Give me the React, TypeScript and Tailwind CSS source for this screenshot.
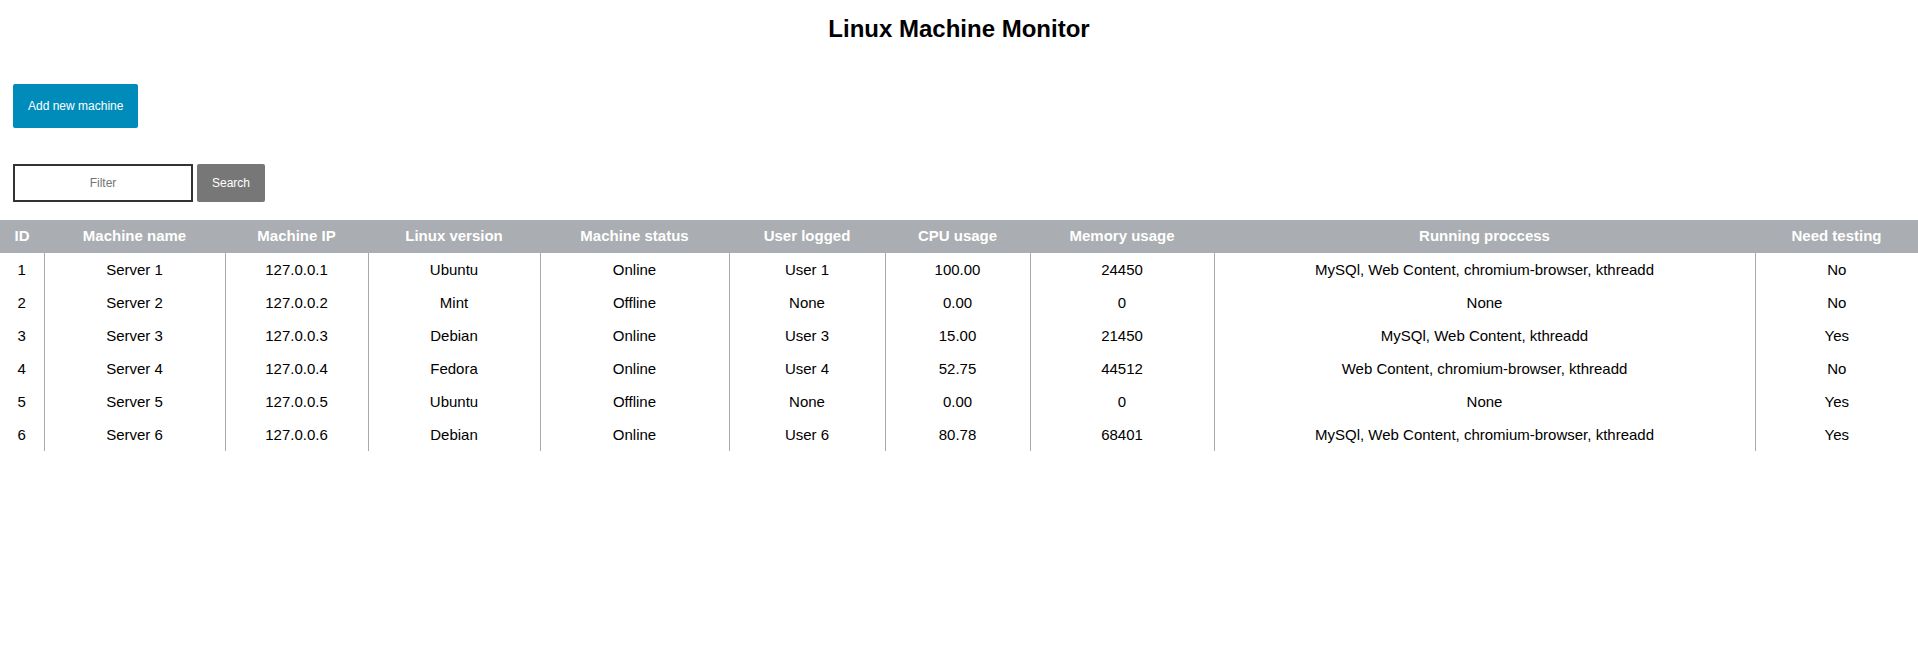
import React from "react";

interface Machine {
  id: number;
  name: string;
  ip: string;
  version: string;
  status: string;
  user: string;
  cpu: string;
  memory: string;
  processes: string;
  testing: string;
}

const MACHINES: Machine[] = [
  { id: 1, name: "Server 1", ip: "127.0.0.1", version: "Ubuntu", status: "Online", user: "User 1", cpu: "100.00", memory: "24450", processes: "MySQl, Web Content, chromium-browser, kthreadd", testing: "No" },
  { id: 2, name: "Server 2", ip: "127.0.0.2", version: "Mint", status: "Offline", user: "None", cpu: "0.00", memory: "0", processes: "None", testing: "No" },
  { id: 3, name: "Server 3", ip: "127.0.0.3", version: "Debian", status: "Online", user: "User 3", cpu: "15.00", memory: "21450", processes: "MySQl, Web Content, kthreadd", testing: "Yes" },
  { id: 4, name: "Server 4", ip: "127.0.0.4", version: "Fedora", status: "Online", user: "User 4", cpu: "52.75", memory: "44512", processes: "Web Content, chromium-browser, kthreadd", testing: "No" },
  { id: 5, name: "Server 5", ip: "127.0.0.5", version: "Ubuntu", status: "Offline", user: "None", cpu: "0.00", memory: "0", processes: "None", testing: "Yes" },
  { id: 6, name: "Server 6", ip: "127.0.0.6", version: "Debian", status: "Online", user: "User 6", cpu: "80.78", memory: "68401", processes: "MySQl, Web Content, chromium-browser, kthreadd", testing: "Yes" },
];

const HEADERS = [
  "ID",
  "Machine name",
  "Machine IP",
  "Linux version",
  "Machine status",
  "User logged",
  "CPU usage",
  "Memory usage",
  "Running proccess",
  "Need testing",
];

export default function App() {
  const cell = "h-[33px] p-0 pt-[2px] text-center align-middle border-l border-[#aaaaaa] first:border-l-0";

  return (
    <div className="w-full min-h-[648px] bg-white text-black font-['Liberation_Sans',Arial,sans-serif]">
      <h2 className="pt-[15px] text-center text-[24px] leading-[28px] font-bold">
        Linux Machine Monitor
      </h2>

      <div className="mt-[41px] pl-[13px]">
        <button className="px-[15px] py-[15px] text-[12px] leading-[14px] text-white bg-[#008cba] rounded-[2px]">
          Add new machine
        </button>
      </div>

      <div className="mt-[36px] pl-[13px] flex items-center gap-[4px]">
        <input
          type="text"
          placeholder="Filter"
          className="w-[180px] h-[38px] border-2 border-[#333333] text-center text-[12px] placeholder:text-[#757575] outline-none"
        />
        <button className="h-[38px] px-[15px] text-[12px] leading-[14px] text-white bg-[#777777] rounded-[2px]">
          Search
        </button>
      </div>

      <table className="mt-[18px] w-full table-fixed border-collapse text-[15px]">
        <colgroup>
          <col className="w-[44px]" />
          <col className="w-[181px]" />
          <col className="w-[143px]" />
          <col className="w-[172px]" />
          <col className="w-[189px]" />
          <col className="w-[156px]" />
          <col className="w-[145px]" />
          <col className="w-[184px]" />
          <col className="w-[541px]" />
          <col />
        </colgroup>
        <thead>
          <tr className="bg-[#aaadb1]">
            {HEADERS.map((h) => (
              <th key={h} className="h-[33px] p-0 text-center align-middle font-bold text-white">
                {h}
              </th>
            ))}
          </tr>
        </thead>
        <tbody>
          {MACHINES.map((m) => (
            <tr key={m.id}>
              <td className={cell}>{m.id}</td>
              <td className={cell}>{m.name}</td>
              <td className={cell}>{m.ip}</td>
              <td className={cell}>{m.version}</td>
              <td className={cell}>{m.status}</td>
              <td className={cell}>{m.user}</td>
              <td className={cell}>{m.cpu}</td>
              <td className={cell}>{m.memory}</td>
              <td className={cell}>{m.processes}</td>
              <td className={cell}>{m.testing}</td>
            </tr>
          ))}
        </tbody>
      </table>
    </div>
  );
}
